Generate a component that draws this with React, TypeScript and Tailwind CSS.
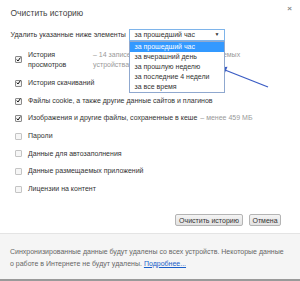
import React from "react";

type Item = { label: string; detail?: string; checked: boolean };

const items: Item[] = [
  { label: "История скачиваний", checked: true },
  { label: "Файлы cookie, а также другие данные сайтов и плагинов", checked: true },
  { label: "Изображения и другие файлы, сохраненные в кеше", detail: "– менее 459 МБ", checked: true },
  { label: "Пароли", checked: false },
  { label: "Данные для автозаполнения", checked: false },
  { label: "Данные размещаемых приложений", checked: false },
  { label: "Лицензии на контент", checked: false },
];

const periods = [
  "за прошедший час",
  "за вчерашний день",
  "за прошлую неделю",
  "за последние 4 недели",
  "за все время",
];

function Box({ checked }: { checked: boolean }) {
  return (
    <span
      className={`flex h-[7px] w-[7px] shrink-0 items-center justify-center rounded-[1px] border ${
        checked ? "border-[#8a8a8a] bg-[#f3f3f3]" : "border-[#c4c4c4] bg-[#f6f6f6]"
      }`}
    >
      {checked && (
        <svg width="7" height="7" viewBox="0 0 7 7" className="-mt-[1px]">
          <path d="M1 3.6 L2.8 5.6 L6.2 0.8" fill="none" stroke="#111" strokeWidth="1.4" />
        </svg>
      )}
    </span>
  );
}

export default function App() {
  return (
    <div
      className="relative h-[281px] w-[300px] overflow-hidden bg-white text-[7px] text-[#333]"
      style={{ fontFamily: '"Liberation Sans", Arial, sans-serif' }}
    >
      {/* заголовок */}
      <div className="flex items-start justify-between pl-[10.5px] pr-[8px] pt-[7.5px]">
        <h1 className="text-[8.5px] leading-[11px] text-[#444]">Очистить историю</h1>
        <span className="-mt-[3px] text-[8px] font-bold leading-[8px] text-[#888]">×</span>
      </div>

      <div className="mt-[10.5px] flex items-center pl-[10.5px]">
        <span className="w-[118px] whitespace-nowrap">Удалить указанные ниже элементы</span>
        <div className="relative">
          <div className="flex h-[12px] w-[96px] items-center justify-between border border-[#7eb4ea] bg-white pl-[5px] pr-[4px]">
            <span>{periods[0]}</span>
            <span className="text-[5px] text-[#333]">▼</span>
          </div>
          {/* раскрытый список */}
          <ul className="absolute left-0 top-[12px] z-10 w-[96px] border border-[#8fa8cf] bg-white">
            {periods.map((p, i) => (
              <li
                key={p}
                className={`flex h-[10px] items-center pl-[5px] ${
                  i === 0 ? "bg-[#3399ff] text-white" : "text-[#333]"
                }`}
              >
                {p}
              </li>
            ))}
          </ul>
        </div>
      </div>

      <div className="mt-[4.3px] pl-[15px]">
        <div className="flex h-[29.4px] items-center gap-[6px]">
          <Box checked />
          <div className="flex whitespace-nowrap leading-[9.5px]">
            <span className="w-[65px]">
              История
              <br />
              просмотров
            </span>
            <span className="text-[#999]">
              – 14 записей (и другие на синхронизируемых
              <br />
              устройствах)
            </span>
          </div>
        </div>
        {items.map((it) => (
          <div key={it.label} className="flex h-[17.6px] items-center gap-[6px] whitespace-nowrap">
            <Box checked={it.checked} />
            <span>
              {it.label}
              {it.detail && <span className="ml-[3px] text-[#999]">{it.detail}</span>}
            </span>
          </div>
        ))}
      </div>

      <div className="mt-[16.5px] flex justify-end gap-[6px] pr-[19px]">
        <button className="h-[12px] w-[68px] rounded-[2px] border border-[#b4b4b4] bg-gradient-to-b from-[#f4f4f4] to-[#e2e2e2] text-[7px] leading-none text-[#333]">
          Очистить историю
        </button>
        <button className="h-[12px] w-[32px] rounded-[2px] border border-[#b4b4b4] bg-gradient-to-b from-[#f4f4f4] to-[#e2e2e2] text-[7px] leading-none text-[#333]">
          Отмена
        </button>
      </div>

      <div className="mt-[6.5px] h-[46px] whitespace-nowrap border-t border-[#e4e4e4] bg-[#f5f5f5] px-[10px] pt-[12px] leading-[12px] text-[#666]">
        Синхронизированные данные будут удалены со всех устройств. Некоторые данные
        <br />о работе в Интернете не будут удалены.{" "}
        <span className="text-[#1a5fc9] underline">Подробнее...</span>
      </div>
      <div className="h-[2px] bg-[#9a9a9a]" />

      {/* стрелка */}
      <svg className="absolute left-0 top-0" width="300" height="281">
        <line x1="268" y1="87" x2="225" y2="70" stroke="#3a5cc4" strokeWidth="1.3" />
        <path d="M219.5 67.5 L227.5 66.8 L224.5 74 Z" fill="#3a5cc4" />
      </svg>
    </div>
  );
}
